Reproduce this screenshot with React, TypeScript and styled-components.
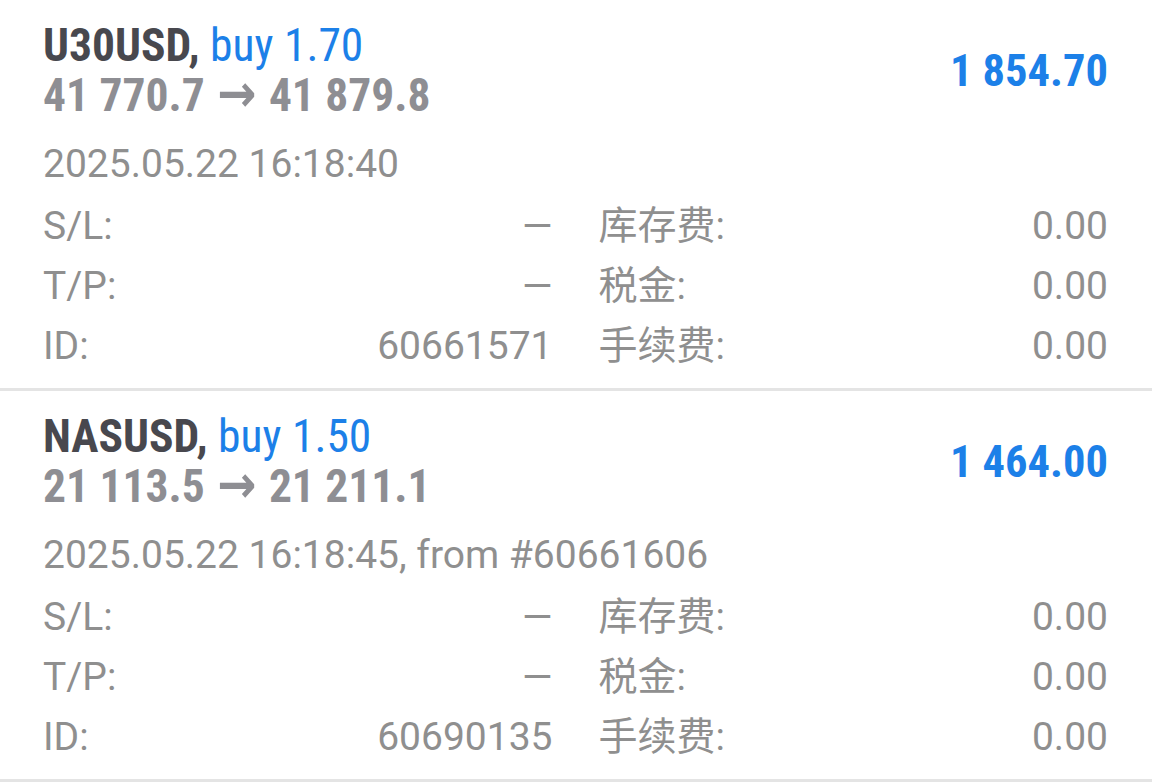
import React from 'react';
import styled, { createGlobalStyle } from 'styled-components';

const GlobalStyle = createGlobalStyle`
  html, body {
    margin: 0;
    padding: 0;
    background: #ffffff;
  }
  body {
    font-family: Roboto, "Noto Sans CJK SC", sans-serif;
  }
`;

const List = styled.div`
  width: 1152px;
  display: flex;
  flex-direction: column;
`;

const Card = styled.div`
  padding: 21px 44px 12px 43px;
  border-bottom: 3px solid #e4e4e4;
`;

const Header = styled.div`
  display: flex;
  justify-content: space-between;
  align-items: center;
`;

const TitleBlock = styled.div`
  display: flex;
  flex-direction: column;
  font-family: "Roboto Condensed", "Liberation Sans Narrow", Roboto, sans-serif;
  font-stretch: condensed;
  font-size: 45.5px;
  line-height: 50px;
`;

const Symbol = styled.span`
  font-weight: 700;
  color: #48484e;
`;

const Side = styled.span`
  font-weight: 400;
  color: #1c80e8;
`;

const Prices = styled.div`
  font-weight: 700;
  color: #8e8e93;
`;

const Arrow = styled.span`
  margin: 0 2px;
  font-family: "DejaVu Sans", sans-serif;
  font-weight: 700;
  font-size: 52px;
  line-height: 30px;
`;

const Profit = styled.div`
  padding-bottom: 1px;
  font-family: "Roboto Condensed", "Liberation Sans Narrow", Roboto, sans-serif;
  font-stretch: condensed;
  font-weight: 700;
  font-size: 44.5px;
  color: #1c80e8;
`;

const DateLine = styled.div`
  margin-top: 13px;
  font-size: 39px;
  line-height: 60px;
  color: #8f8f8f;
`;

const Details = styled.div`
  margin-top: 2px;
  display: grid;
  grid-template-columns: 1fr 1fr;
  column-gap: 46px;
  grid-auto-rows: 60px;
`;

const Field = styled.div`
  display: flex;
  justify-content: space-between;
  align-items: baseline;
  font-size: 39px;
  line-height: 60px;
  color: #8f8f8f;
`;

const Label = styled.span`
  font-family: Roboto, "Noto Sans CJK SC", sans-serif;
`;

const Value = styled.span``;

type Trade = {
  symbol: string;
  side: string;
  open: string;
  close: string;
  profit: string;
  time: string;
  sl: string;
  tp: string;
  id: string;
};

const trades: Trade[] = [
  {
    symbol: 'U30USD',
    side: 'buy 1.70',
    open: '41 770.7',
    close: '41 879.8',
    profit: '1 854.70',
    time: '2025.05.22 16:18:40',
    sl: '—',
    tp: '—',
    id: '60661571',
  },
  {
    symbol: 'NASUSD',
    side: 'buy 1.50',
    open: '21 113.5',
    close: '21 211.1',
    profit: '1 464.00',
    time: '2025.05.22 16:18:45, from #60661606',
    sl: '—',
    tp: '—',
    id: '60690135',
  },
];

const TradeCard: React.FC<{ trade: Trade }> = ({ trade }) => (
  <Card>
    <Header>
      <TitleBlock>
        <div>
          <Symbol>{trade.symbol},</Symbol> <Side>{trade.side}</Side>
        </div>
        <Prices>
          {trade.open} <Arrow>→</Arrow> {trade.close}
        </Prices>
      </TitleBlock>
      <Profit>{trade.profit}</Profit>
    </Header>
    <DateLine>{trade.time}</DateLine>
    <Details>
      <Field>
        <Label>S/L:</Label>
        <Value>{trade.sl}</Value>
      </Field>
      <Field>
        <Label>库存费:</Label>
        <Value>0.00</Value>
      </Field>
      <Field>
        <Label>T/P:</Label>
        <Value>{trade.tp}</Value>
      </Field>
      <Field>
        <Label>税金:</Label>
        <Value>0.00</Value>
      </Field>
      <Field>
        <Label>ID:</Label>
        <Value>{trade.id}</Value>
      </Field>
      <Field>
        <Label>手续费:</Label>
        <Value>0.00</Value>
      </Field>
    </Details>
  </Card>
);

export default function App() {
  return (
    <>
      <GlobalStyle />
      <List>
        {trades.map((t) => (
          <TradeCard key={t.id} trade={t} />
        ))}
      </List>
    </>
  );
}
